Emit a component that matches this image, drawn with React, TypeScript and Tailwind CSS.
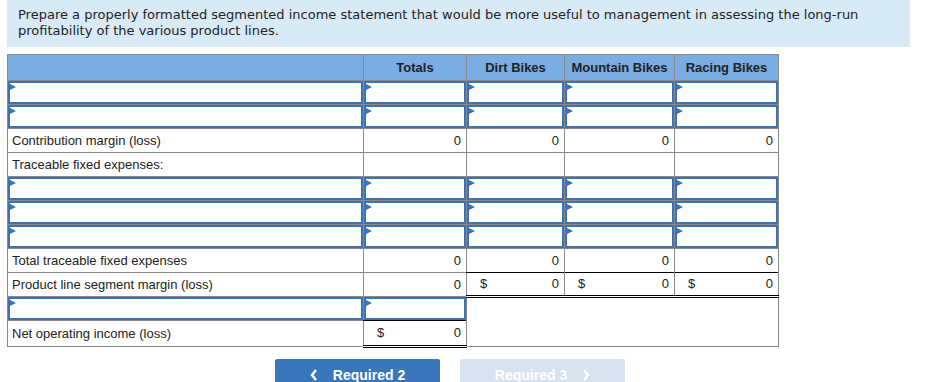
import React from "react";

const gray = "border border-[#8a8a8a]";

function InputCell({ colSpan }: { colSpan?: number }) {
  return (
    <td colSpan={colSpan} className={`${gray} p-0 h-[24px]`}>
      <div className="relative h-[23px] border-2 border-[#3d71b6] bg-white">
        {/* little blue marker in the corner */}
        <span className="absolute left-0 top-[1px] w-0 h-0 border-y-[3px] border-y-transparent border-l-[6px] border-l-[#3d71b6]" />
      </div>
    </td>
  );
}

function InputRow() {
  return (
    <tr>
      <InputCell />
      <InputCell />
      <InputCell />
      <InputCell />
      <InputCell />
    </tr>
  );
}

function Num({ v, dollar, top, dbl }: { v?: string; dollar?: boolean; top?: boolean; dbl?: boolean }) {
  return (
    <td
      className={`${gray} px-[5px] ${top ? "border-t-black" : ""} ${dbl ? "border-b-[3px] border-b-black border-double" : ""}`}
    >
      <div className="flex justify-between">
        <span className="pl-[8px]">{dollar ? "$" : ""}</span>
        <span>{v}</span>
      </div>
    </td>
  );
}

function Label({ text }: { text: string }) {
  return <td className={`${gray} px-[4px] h-[24px]`}>{text}</td>;
}

export default function App() {
  return (
    <div className="w-[949px] h-[382px] overflow-hidden bg-white text-[#222]" style={{ fontFamily: "'Liberation Sans', Arial, sans-serif" }}>
      <div className="ml-[7px] w-[903px] h-[47px] bg-[#d9eaf7] pl-[11px] pt-[7px] text-[13px] leading-[16px] text-[#222]" style={{ fontFamily: "'DejaVu Sans', Verdana, sans-serif" }}>
        Prepare a properly formatted segmented income statement that would be more useful to management in assessing the long-run profitability of the various product lines.
      </div>

      <table className="ml-[7px] mt-[7px] w-[771px] table-fixed border-collapse text-[13px] leading-[18px]">
        <colgroup>
          <col className="w-[356px]" />
          <col className="w-[103px]" />
          <col className="w-[98px]" />
          <col className="w-[110px]" />
          <col className="w-[104px]" />
        </colgroup>
        <tbody>
          <tr className="bg-[#79ade3] text-[13px] font-bold h-[26px]">
            <td className={gray}></td>
            <td className={`${gray} text-center`}>Totals</td>
            <td className={`${gray} text-center`}>Dirt Bikes</td>
            <td className={`${gray} text-center`}>Mountain Bikes</td>
            <td className={`${gray} text-center`}>Racing Bikes</td>
          </tr>
          <InputRow />
          <InputRow />
          <tr>
            <Label text="Contribution margin (loss)" />
            <Num v="0" top />
            <Num v="0" top />
            <Num v="0" top />
            <Num v="0" top />
          </tr>
          <tr>
            <Label text="Traceable fixed expenses:" />
            <Num />
            <Num />
            <Num />
            <Num />
          </tr>
          <InputRow />
          <InputRow />
          <InputRow />
          <tr>
            <Label text="Total traceable fixed expenses" />
            <Num v="0" top />
            <Num v="0" top />
            <Num v="0" top />
            <Num v="0" top />
          </tr>
          <tr>
            <Label text="Product line segment margin (loss)" />
            <Num v="0" top />
            <Num v="0" dollar top dbl />
            <Num v="0" dollar top dbl />
            <Num v="0" dollar top dbl />
          </tr>
          <tr>
            <InputCell />
            <InputCell />
            <td colSpan={3} rowSpan={2} className={gray}></td>
          </tr>
          <tr>
            <td className={`${gray} px-[4px] h-[26px]`}>Net operating income (loss)</td>
            <Num v="0" dollar top dbl />
          </tr>
        </tbody>
      </table>

      <div className="flex gap-[20px] ml-[275px] mt-[11px]">
        <button className="w-[165px] h-[32px] rounded-t-[2px] bg-[#3a77ba] text-white text-[14px] font-bold flex items-center justify-center gap-[15px]">
          <svg width="8" height="12" viewBox="0 0 8 12" fill="none" stroke="white" strokeWidth="2.4">
            <path d="M6 1 L2 6 L6 11" />
          </svg>
          <span>Required 2</span>
        </button>
        <button className="w-[165px] h-[32px] rounded-t-[2px] bg-[#d8e3f0] text-white text-[14px] font-bold flex items-center justify-center gap-[15px]">
          <span>Required 3</span>
          <svg width="8" height="12" viewBox="0 0 8 12" fill="none" stroke="white" strokeWidth="2.4">
            <path d="M2 1 L6 6 L2 11" />
          </svg>
        </button>
      </div>
    </div>
  );
}
